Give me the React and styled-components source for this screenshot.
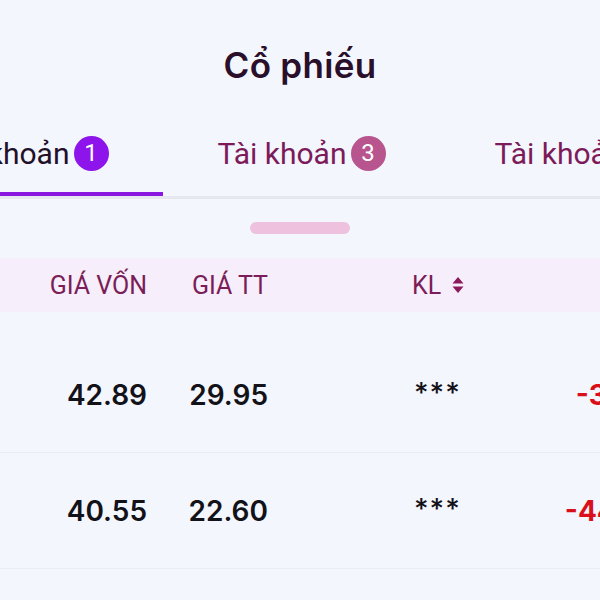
import React from 'react';
import styled, { createGlobalStyle } from 'styled-components';

const GlobalStyle = createGlobalStyle`
  body {
    margin: 0;
    background: #f3f6fd;
    font-family: Roboto, "Noto Sans", sans-serif;
  }
`;

const Screen = styled.div`
  width: 600px;
  height: 600px;
  overflow: hidden;
  background: #f3f6fd;
`;

const Title = styled.h1`
  margin: 0;
  padding: 45px 0 29px;
  font-family: Inter, Roboto, sans-serif;
  font-size: 35px;
  line-height: 40px;
  font-weight: 600;
  letter-spacing: 0.3px;
  text-align: center;
  color: #2a0f2b;
`;

const TabStrip = styled.div`
  border-bottom: 3px solid #e7e8ef;
`;

const TabTrack = styled.div`
  display: flex;
  margin-left: -114px;
`;

const Tab = styled.div`
  flex: 0 0 277px;
  height: 78px;
  display: flex;
  align-items: center;
  justify-content: center;
  gap: 4px;
  border-bottom: 4px solid ${(p) => (p.$active ? '#8a17df' : 'transparent')};
`;

const TabLabel = styled.span`
  font-size: 30px;
  color: ${(p) => (p.$active ? '#22102a' : '#7c1a5a')};
`;

const Badge = styled.span`
  width: 35px;
  height: 35px;
  border-radius: 50%;
  display: flex;
  align-items: center;
  justify-content: center;
  background: ${(p) => (p.$active ? '#8d14ea' : '#b8558f')};
  color: #fff;
  font-size: 24px;
`;

const Handle = styled.div`
  width: 100px;
  height: 12px;
  border-radius: 6px;
  background: #eec2de;
  margin: 23px auto 24px;
`;

const Grid = styled.div`
  display: grid;
  grid-template-columns: 147px 121px 212px 180px;
  align-items: center;
`;

const HeaderRow = styled(Grid)`
  height: 54px;
  background: #f6eefa;
`;

const HeadCell = styled.div`
  font-size: 25px;
  color: #7b1d58;
  padding-left: ${(p) => p.$pad || 0}px;
  display: flex;
  align-items: center;
  justify-content: ${(p) => (p.$left ? 'flex-start' : 'flex-end')};
  gap: 11px;
`;

const Body = styled.div`
  padding-top: 25px;
`;

const Row = styled(Grid)`
  height: 115px;
  border-bottom: 1px solid #e9ecf4;
`;

const Cell = styled.div`
  font-family: Inter, Roboto, sans-serif;
  font-size: 28px;
  color: ${(p) => (p.$neg ? '#d90f1b' : '#121218')};
  text-align: ${(p) => (p.$left ? 'left' : 'right')};
  padding-left: ${(p) => p.$pad || 0}px;
  font-weight: ${(p) => (p.$neg ? 700 : 600)};
`;

const Masked = styled(Cell)`
  letter-spacing: 1px;
  font-weight: 500;
  margin-top: -4px;
`;

const SortIcon = () => (
  <svg width="12" height="18" viewBox="0 0 12 18">
    <path d="M6 1 L11.5 7.5 H0.5 Z" fill="#8b1a5c" />
    <path d="M6 17 L11.5 10.5 H0.5 Z" fill="#8b1a5c" />
  </svg>
);

const tabs = [
  { label: 'Tài khoản', count: 1, active: true },
  { label: 'Tài khoản', count: 3 },
  { label: 'Tài khoản', count: 2 },
];

const rows = [
  { cost: '42.89', price: '29.95', pnl: '-30.17' },
  { cost: '40.55', price: '22.60', pnl: '-44.26' },
];

export default function App() {
  return (
    <Screen>
      <GlobalStyle />
      <Title>Cổ phiếu</Title>
      <TabStrip>
        <TabTrack>
          {tabs.map((t, i) => (
            <Tab key={i} $active={t.active}>
              <TabLabel $active={t.active}>{t.label}</TabLabel>
              <Badge $active={t.active}>{t.count}</Badge>
            </Tab>
          ))}
        </TabTrack>
      </TabStrip>
      <Handle />
      <HeaderRow>
        <HeadCell>GIÁ VỐN</HeadCell>
        <HeadCell>GIÁ TT</HeadCell>
        <HeadCell $left $pad={144}>
          KL <SortIcon />
        </HeadCell>
        <HeadCell />
      </HeaderRow>
      <Body>
        {rows.map((r, i) => (
          <Row key={i}>
            <Cell>{r.cost}</Cell>
            <Cell>{r.price}</Cell>
            <Masked $left $pad={146}>***</Masked>
            <Cell $neg>{r.pnl}</Cell>
          </Row>
        ))}
      </Body>
    </Screen>
  );
}
